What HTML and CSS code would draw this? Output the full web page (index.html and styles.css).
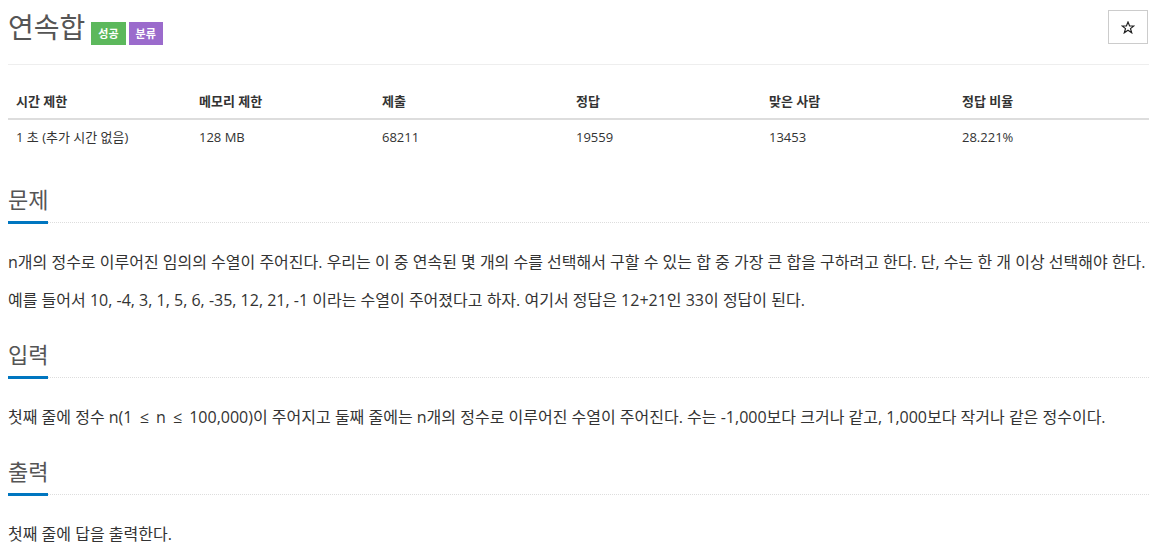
FILE: index.html
```html
<!DOCTYPE html>
<html lang="ko">
<head>
<meta charset="utf-8">
<title>연속합</title>
<link rel="stylesheet" href="styles.css">
</head>
<body>
<div class="page">
  <div class="title-row">
    <h1 class="title">
      <span class="title-text">연속합</span>
      <span class="label label-green">성공</span>
      <span class="label label-purple">분류</span>
    </h1>
    <button class="star" type="button" aria-label="즐겨찾기">
      <svg class="star-icon" width="14" height="13" viewBox="0 0 14 13"><polygon points="7,1 8.6,4.9 12.8,5 9.5,7.6 10.7,11.8 7,9.3 3.3,11.8 4.5,7.6 1.2,5 5.4,4.9" fill="none" stroke="#222" stroke-width="1.2" stroke-linejoin="miter"/></svg>
    </button>
  </div>
  <hr class="rule">
  <table class="stats">
    <thead>
      <tr>
        <th class="c1">시간 제한</th>
        <th class="c2">메모리 제한</th>
        <th class="c3">제출</th>
        <th class="c4">정답</th>
        <th class="c5">맞은 사람</th>
        <th class="c6">정답 비율</th>
      </tr>
    </thead>
    <tbody>
      <tr>
        <td>1 초 (추가 시간 없음)</td>
        <td>128 MB</td>
        <td>68211</td>
        <td>19559</td>
        <td>13453</td>
        <td>28.221%</td>
      </tr>
    </tbody>
  </table>

  <section class="section">
    <div class="headline"><h2>문제</h2></div>
    <p>n개의 정수로 이루어진 임의의 수열이 주어진다. 우리는 이 중 연속된 몇 개의 수를 선택해서 구할 수 있는 합 중 가장 큰 합을 구하려고 한다. 단, 수는 한 개 이상 선택해야 한다.</p>
    <p>예를 들어서 10, -4, 3, 1, 5, 6, -35, 12, 21, -1 이라는 수열이 주어졌다고 하자. 여기서 정답은 12+21인 33이 정답이 된다.</p>
  </section>

  <section class="section">
    <div class="headline"><h2>입력</h2></div>
    <p>첫째 줄에 정수 n(1 <span class="le">≤</span> n <span class="le">≤</span> 100,000)이 주어지고 둘째 줄에는 n개의 정수로 이루어진 수열이 주어진다. 수는 -1,000보다 크거나 같고, 1,000보다 작거나 같은 정수이다.</p>
  </section>

  <section class="section">
    <div class="headline"><h2>출력</h2></div>
    <p>첫째 줄에 답을 출력한다.</p>
  </section>
</div>
</body>
</html>
```

FILE: styles.css
```css
html, body {
  background: #fff;
}
body {
  margin: 8px;
  font-family: "Open Sans", "Noto Sans CJK KR", sans-serif;
  color: #333;
}
.page {
  width: 1141px;
}
.title-row {
  display: flex;
  justify-content: space-between;
  align-items: flex-start;
  height: 56px;
}
.title {
  margin: 0;
  display: flex;
  align-items: flex-start;
  font-weight: 400;
}
.title-text {
  font-size: 28px;
  line-height: 38px;
  color: #555;
  margin-right: 6px;
}
.label {
  margin-top: 14px;
  height: 23px;
  padding: 0 7px;
  font-size: 11px;
  line-height: 23px;
  font-weight: 700;
  color: #fff;
  margin-right: 3px;
}
.label-green {
  background: #5cb85c;
}
.label-purple {
  background: #9b6bcc;
}
.star {
  margin-top: 2px;
  margin-right: 1px;
  width: 40px;
  height: 34px;
  background: #fff;
  border: 1px solid #ccc;
  border-radius: 0;
  padding: 0;
  display: flex;
  align-items: center;
  justify-content: center;
}
.star-icon {
  display: block;
}
.rule {
  margin: 0;
  border: 0;
  border-top: 1px solid #eee;
}
.stats {
  margin-top: 19px;
  width: 100%;
  border-collapse: collapse;
  font-size: 13px;
}
.stats th,
.stats td {
  text-align: left;
  padding: 7px 8px;
  line-height: 20px;
}
.stats th {
  font-weight: 700;
  border-bottom: 2px solid #ddd;
}
.c1 { width: 167px; }
.c2 { width: 167px; }
.c3 { width: 178px; }
.c4 { width: 177px; }
.c5 { width: 177px; }
.section {
  margin-top: 27px;
}
.stats + .section {
  margin-top: 30px;
}
.headline {
  border-bottom: 1px dotted #ddd;
}
.headline h2 {
  display: inline-block;
  margin: 0 0 -2px;
  padding-bottom: 7px;
  font-size: 22px;
  line-height: 30px;
  font-weight: 400;
  color: #555;
  border-bottom: 3px solid #0076c0;
}
.section p {
  margin: 0 0 14px;
  font-size: 16px;
  line-height: 24px;
}
.headline + p {
  margin-top: 27px;
}
.le {
  display: inline-block;
  padding: 0 3px;
}
```
